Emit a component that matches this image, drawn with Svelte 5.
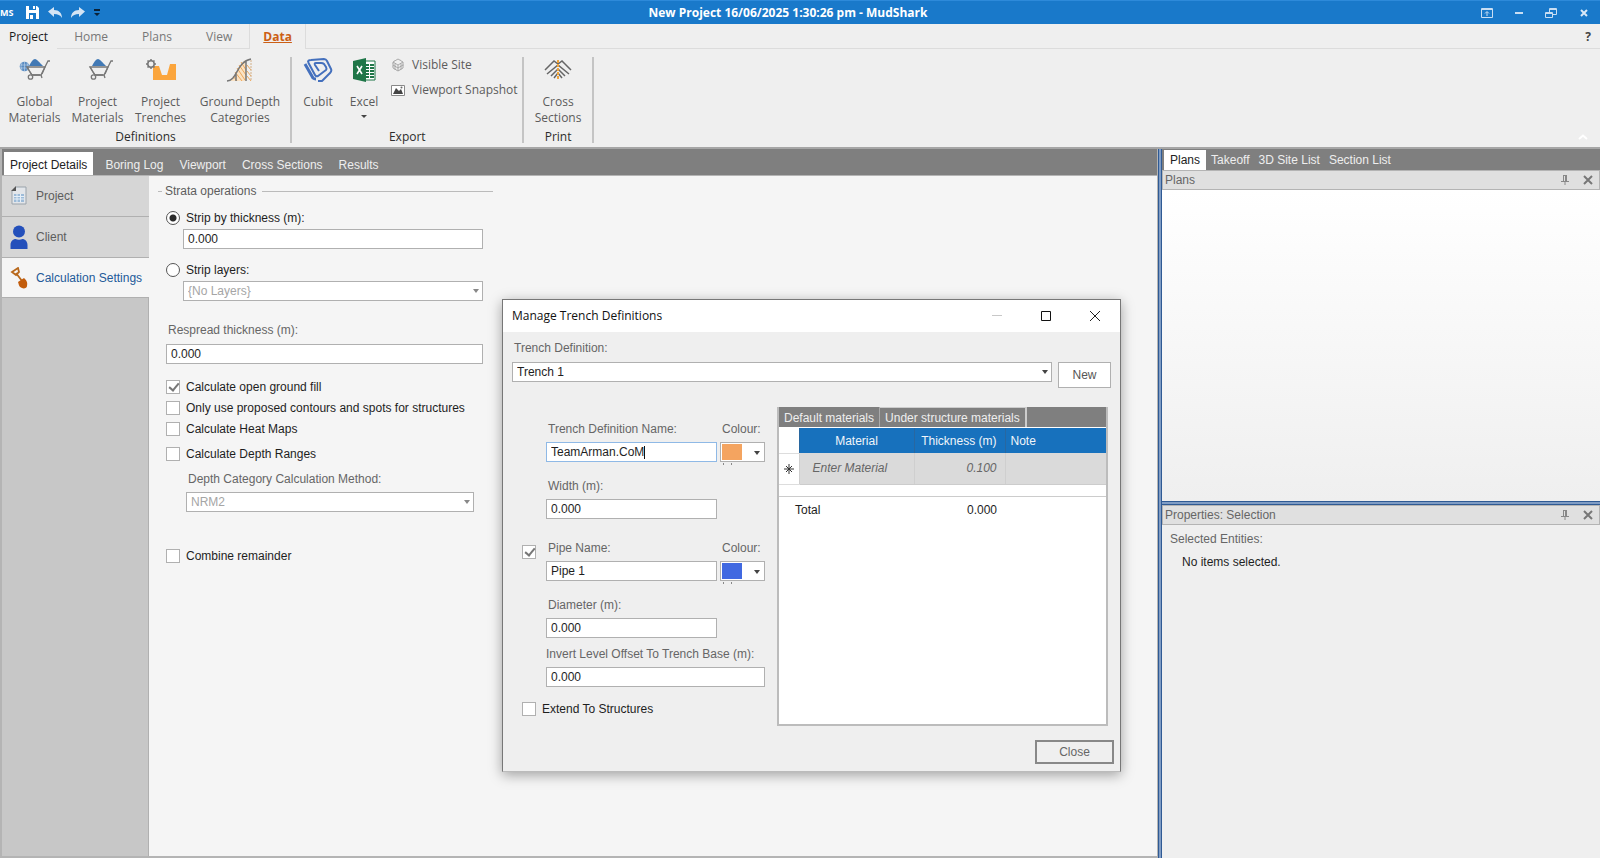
<script>
  const ribbonTabs = ['Home', 'Plans', 'View'];
  const mainTabs = ['Boring Log', 'Viewport', 'Cross Sections', 'Results'];
  const sideTabs = ['Takeoff', '3D Site List', 'Section List'];
  let stripMode = $state('thickness');
</script>

{#snippet barrow(globe)}
  <svg width="34" height="26" viewBox="0 0 34 26" fill="none" stroke="#777" stroke-width="1.3">
    {#if globe}
      <circle cx="6.500" cy="9.500" r="4.800" fill="#5a8cc2" stroke="none" />
      <path d="M2 8h9M2 11h9M6.500 5v9M4 5.500q-2 4 0 8M9 5.500q2 4 0 8" stroke="#c4d6ea" stroke-width=".6" />
    {/if}
    <path d="M11 9c2-4 4-7 6-7s5 4 8 7z" fill="#4179b5" stroke="none" />
    <path d="M9 10h18l-4 8h-9z" />
    <path d="M32 4h-2l-3 6-3 7M14 18l-2-3-3-5M23 18l1 3M14 18l8 0" />
    <circle cx="12.500" cy="20" r="2.200" fill="#efefef" />
  </svg>
{/snippet}

{#snippet pin()}
  <svg width="8" height="12" viewBox="0 0 8 12" fill="none" stroke="#888"><path d="M2 1.500h4M2.500 1v6M5.500 1v6M4.500 1v6M0 7.500h8M4 8v3" /></svg>
{/snippet}

{#snippet cross()}
  <svg width="10" height="10" viewBox="0 0 10 10" stroke="#777" stroke-width="2"><path d="M1 1l8 8M9 1l-8 8" /></svg>
{/snippet}

<div class="app">
  <header class="titlebar">
    <div class="quick">
      <span class="logo">MS</span>
      <button aria-label="Save"><svg width="13" height="13" viewBox="0 0 13 13"><path d="M0 0h11l2 2v11H0z" fill="#fff" /><path d="M3 0h7v4H3zM3 7h7v6H3z" fill="#1979ca" /><path d="M7 0h2v3H7zM4 9h3v4H4z" fill="#fff" /></svg></button>
      <button aria-label="Undo"><svg width="14" height="12" viewBox="0 0 14 12"><path d="M0 4.500L6 0v3c5 0 8 3 8 8-2-3-4-4-8-4v3z" fill="#d4e4f4" /></svg></button>
      <button aria-label="Redo"><svg width="14" height="12" viewBox="0 0 14 12"><path d="M14 4.500L8 0v3c-5 0-8 3-8 8 2-3 4-4 8-4v3z" fill="#d4e4f4" /></svg></button>
      <button aria-label="Customise toolbar"><svg width="6" height="8" viewBox="0 0 6 8"><path d="M0 0h6v2H0zM0 4h6L3 7z" fill="#0b2238" /></svg></button>
    </div>
    <h1>New Project 16/06/2025 1:30:26 pm - MudShark</h1>
    <div class="winbtns">
      <button aria-label="Ribbon options"><svg width="12" height="12" viewBox="0 0 12 12" fill="none" stroke="#c9def3"><path d="M.5 1.500h11v9H.5zM.5 2.500h11M6 9V5M4 6.500L6 4.500l2 2" /></svg></button>
      <button aria-label="Minimise"><svg width="12" height="12" viewBox="0 0 12 12"><path d="M2 5h8v2H2z" fill="#c9def3" /></svg></button>
      <button aria-label="Restore"><svg width="12" height="12" viewBox="0 0 12 12" fill="none" stroke="#c9def3"><path d="M.5 5.500h7v5h-7zM.5 6.500h7M4.500 5V1.500h7v6H8M4.500 2.500h7" /></svg></button>
      <button class="shut" aria-label="Close window"><svg width="8" height="8" viewBox="0 0 8 8" stroke="#d9e8f7" stroke-width="2"><path d="M1 1l6 6M7 1L1 7" /></svg></button>
    </div>
  </header>

  <nav class="rtabs">
    <button class="file">Project</button>
    {#each ribbonTabs as t}<button>{t}</button>{/each}
    <button class="active"><span>Data</span></button>
    <span class="fill"></span>
    <button class="help" aria-label="Help">?</button>
  </nav>

  <section class="ribbon">
    <div class="group">
      <div class="tools">
        <button class="tool">{@render barrow(true)}<span>Global<br />Materials</span></button>
        <button class="tool">{@render barrow(false)}<span>Project<br />Materials</span></button>
        <button class="tool">
          <svg width="32" height="26" viewBox="0 0 32 26"><path d="M8 23V9h6l3 9h5l3-11h6v16z" fill="#fba53c" /><circle cx="6" cy="7" r="3.200" fill="#efefef" stroke="#777" stroke-width="1.500" /><path d="M6 2v2M6 10v2M1 7h2M9 7h2M2.500 3.500l1.300 1.300M8.200 9.200l1.300 1.300M9.500 3.500L8.200 4.800M3.800 9.200l-1.300 1.300" stroke="#777" stroke-width="1.500" /></svg>
          <span>Project<br />Trenches</span>
        </button>
        <button class="tool wide">
          <svg width="28" height="26" viewBox="0 0 28 26" fill="none"><path d="M4 24c6-3 9-19 16-21v21z" fill="#fbe3c4" /><path d="M7 19l4 5M9 15l7 9M11 11l8 12M13 8l7 10M15 5l5 8M21 8l4 5M21 14l4 5M21 19l4 5" stroke="#eda75c" /><path d="M25 3v21" stroke="#d3b088" stroke-dasharray="2 1" /><path d="M1 24c11-1 9-19 24-22M10 17v7M20 4v20" stroke="#777" stroke-width="1.500" /></svg>
          <span>Ground Depth<br />Categories</span>
        </button>
      </div>
      <span class="gname">Definitions</span>
    </div>
    <div class="group">
      <div class="tools">
        <button class="tool slim">
          <svg width="30" height="26" viewBox="0 0 30 26" fill="none" stroke="#4470bd" stroke-linejoin="round"><path d="M2 7l8 14q1 1 3 1" stroke-width="3" /><path d="M5 5q0-2 3-2l13-1q2 0 3 2l4 8q1 2-1 4l-8 8h-4" stroke-width="2" /><path d="M5 5l7 13q1 2 3 1l8-6q1-1 0-3l-2-3q-1-1-3-1h-5q-2 0-1 2l4 6" stroke-width="2" /></svg>
          <span>Cubit</span>
        </button>
        <button class="tool slim">
          <svg width="24" height="26" viewBox="0 0 24 26"><path d="M12 4h11v19H12z" fill="#fff" stroke="#1f7648" /><path d="M14 7h3v2h-3zM18 7h4v2h-4zM14 10h3v2h-3zM18 10h4v2h-4zM14 13h3v2h-3zM18 13h4v2h-4zM14 16h3v2h-3zM18 16h4v2h-4zM14 19h3v2h-3zM18 19h4v2h-4z" fill="#1f7648" /><path d="M1 4l13-3v24L1 22z" fill="#1f7648" /><path d="M5 9l5 8M10 9l-5 8" stroke="#fff" stroke-width="1.600" /></svg>
          <span>Excel</span><i class="tri"></i>
        </button>
        <div class="stack">
          <button><svg width="14" height="14" viewBox="0 0 14 14" fill="none" stroke="#999"><path d="M7 1l5 3-5 3-5-3zM2 4v6l5 3 5-3V4M7 7v6M4 5.500v6M10 5.500v6M2 7l5 3 5-3" stroke-width=".8" /><circle cx="7" cy="7" r="5.500" stroke="#bbb" stroke-dasharray="1 2" /></svg>Visible Site</button>
          <button><svg width="14" height="14" viewBox="0 0 14 14"><path d="M.5 2.500h13v10H.5z" fill="#fff" stroke="#888" /><path d="M2 11l3-6 3 3 2-2 2 5z" fill="#444" /><circle cx="10.500" cy="4.500" r="1" fill="#666" /></svg>Viewport Snapshot</button>
        </div>
      </div>
      <span class="gname">Export</span>
    </div>
    <div class="group">
      <div class="tools">
        <button class="tool">
          <svg width="28" height="26" viewBox="0 0 28 26" fill="none" stroke="#666" stroke-width="1.500"><path d="M1 13l9-9 4 3 4-3 9 9M3 17l11-9 11 9M7 19l7-7 7 7M10 21l4-5 4 5" /><path d="M14 3v20" stroke="#eda33c" stroke-width="2" stroke-dasharray="3 1" /></svg>
          <span>Cross<br />Sections</span>
        </button>
      </div>
      <span class="gname">Print</span>
    </div>
    <button class="collapse" aria-label="Collapse ribbon"><svg width="10" height="6" viewBox="0 0 10 6" fill="none" stroke="#fff" stroke-width="2"><path d="M1 5l4-3.500L9 5" /></svg></button>
  </section>

  <div class="body">
    <main class="left">
      <nav class="mtabs">
        <button class="sel">Project Details</button>
        {#each mainTabs as t}<button>{t}</button>{/each}
      </nav>
      <div class="work">
        <nav class="side">
          <button><svg width="18" height="20" viewBox="0 0 18 20"><path d="M6 1h10v17H2V5z" fill="#e3e6ea" stroke="#9aa3ab" /><path d="M6 0v5H1z" fill="#555" /><path d="M4 8h10v8H4z" fill="#9dbbd8" /><path d="M4 10.500h10M4 13h10M7 8v8M10.500 8v8" stroke="#e6eff7" /></svg>Project</button>
          <button><svg width="18" height="24" viewBox="0 0 18 24" fill="#2450bb"><circle cx="9" cy="6.500" r="6" /><path d="M.5 24v-4c0-4 3-6 5-6 2 1 5 1 7 0 2 0 5 2 5 6v4z" /></svg>Client</button>
          <button class="sel"><svg width="18" height="22" viewBox="0 0 18 22"><path d="M2 5l6-4 1 4-3 3zM6 6l6 8" fill="none" stroke="#b8681c" stroke-width="1.800" /><path d="M8 15l6-4c2 2 4 4 3 8 0 2-3 3-5 2-3-1-3-3-4-6z" fill="#c25c0c" /></svg>Calculation Settings</button>
        </nav>
        <form class="settings">
          <fieldset>
            <legend>Strata operations</legend>
            <label class="opt"><input type="radio" name="strip" value="thickness" bind:group={stripMode} />Strip by thickness (m):</label>
            <input class="box in" type="text" value="0.000" aria-label="Strip thickness" />
            <label class="opt second"><input type="radio" name="strip" value="layers" bind:group={stripMode} />Strip layers:</label>
            <div class="combo in"><select class="box" disabled aria-label="Strip layers"><option>{'{No Layers}'}</option></select></div>
          </fieldset>
          <label class="cap respread" for="respread">Respread thickness (m):</label>
          <input class="box resin" id="respread" type="text" value="0.000" />
          <div class="checks">
            <label class="opt"><input type="checkbox" checked />Calculate open ground fill</label>
            <label class="opt"><input type="checkbox" />Only use proposed contours and spots for structures</label>
            <label class="opt"><input type="checkbox" />Calculate Heat Maps</label>
          </div>
          <label class="opt"><input type="checkbox" />Calculate Depth Ranges</label>
          <div class="depth">
            <label class="cap" for="method">Depth Category Calculation Method:</label>
            <div class="combo"><select class="box" id="method" disabled><option>NRM2</option></select></div>
          </div>
          <label class="opt"><input type="checkbox" />Combine remainder</label>
        </form>
      </div>
    </main>

    <div class="vsplit"></div>
    <aside class="right">
      <nav class="ptabs">
        <button class="sel">Plans</button>
        {#each sideTabs as t}<button>{t}</button>{/each}
      </nav>
      <div class="phead"><h2>Plans</h2><button aria-label="Pin plans">{@render pin()}</button><button aria-label="Close plans">{@render cross()}</button></div>
      <div class="plans"></div>
      <div class="hsplit"></div>
      <div class="phead"><h2>Properties: Selection</h2><button aria-label="Pin properties">{@render pin()}</button><button aria-label="Close properties">{@render cross()}</button></div>
      <div class="props"><h3>Selected Entities:</h3><p>No items selected.</p></div>
    </aside>
  </div>

  <div class="dialog" role="dialog" aria-labelledby="dlg">
    <header>
      <h2 id="dlg">Manage Trench Definitions</h2>
      <button aria-label="Minimise dialog" disabled><svg width="12" height="12" viewBox="0 0 12 12"><path d="M1 5h10v1H1z" fill="#c8c8c8" /></svg></button>
      <button aria-label="Maximise dialog"><svg width="12" height="12" viewBox="0 0 12 12" fill="none" stroke="#111"><path d="M1.500 1.500h9v9h-9z" /></svg></button>
      <button aria-label="Close dialog"><svg width="12" height="12" viewBox="0 0 12 12" stroke="#222"><path d="M1 1l10 10M11 1L1 11" /></svg></button>
    </header>
    <div class="pick">
      <label class="cap" for="trench">Trench Definition:</label>
      <div class="pickrow">
        <div class="combo"><select class="box" id="trench"><option>Trench 1</option></select></div>
        <button class="new">New</button>
      </div>
    </div>
    <div class="cols">
      <div class="fields">
        <div class="pair">
          <div class="field"><label class="cap" for="tname">Trench Definition Name:</label><div class="editing"><input class="box" id="tname" type="text" value="TeamArman.CoM" /><i></i></div></div>
          <div class="colour"><span class="cap">Colour:</span><button class="swatch" aria-label="Trench colour"><b class="orange"></b></button></div>
        </div>
        <div class="field"><label class="cap" for="width">Width (m):</label><input class="box" id="width" type="text" value="0.000" /></div>
        <div class="pair pipe">
          <input class="use" type="checkbox" checked aria-label="Use pipe" />
          <div class="field"><label class="cap" for="pname">Pipe Name:</label><input class="box" id="pname" type="text" value="Pipe 1" /></div>
          <div class="colour"><span class="cap">Colour:</span><button class="swatch" aria-label="Pipe colour"><b class="blue"></b></button></div>
        </div>
        <div class="field"><label class="cap" for="dia">Diameter (m):</label><input class="box" id="dia" type="text" value="0.000" /></div>
        <div class="field full"><label class="cap" for="invert">Invert Level Offset To Trench Base (m):</label><input class="box" id="invert" type="text" value="0.000" /></div>
        <label class="opt extend"><input type="checkbox" />Extend To Structures</label>
      </div>
      <div class="materials">
        <nav><button>Default materials</button><button class="sel">Under structure materials</button></nav>
        <table>
          <thead><tr><th class="mark"></th><th class="mat">Material</th><th class="thick">Thickness (m)</th><th class="note">Note</th></tr></thead>
          <tbody><tr><td class="mark"><svg width="10" height="10" viewBox="0 0 10 10" stroke="#333"><path d="M5 0v10M0 5h10M2 2l6 6M8 2L2 8" /></svg></td><td class="mat">Enter Material</td><td class="thick">0.100</td><td></td></tr></tbody>
          <tfoot><tr class="gap"><td colspan="4"></td></tr><tr><td colspan="2" class="total">Total</td><td class="thick">0.000</td><td></td></tr></tfoot>
        </table>
      </div>
    </div>
    <footer><button>Close</button></footer>
  </div>
</div>

<style>
  :global(body) { margin: 0; }
  .app, .app * { box-sizing: border-box; }
  .app { display: flex; flex-direction: column; min-height: 100vh; position: relative; background: #efefef; color: #1e1e1e; font: 12px/16px "Liberation Sans", Arial, sans-serif; }
  button, input, select { font: inherit; color: inherit; margin: 0; padding: 0; border: 0; background: none; border-radius: 0; }
  button { display: flex; align-items: center; justify-content: center; white-space: nowrap; }
  h1, h2, h3, p { margin: 0; font: inherit; }
  svg { display: block; flex: none; }
  .titlebar, .rtabs, .ribbon, .dialog header { font-family: "Open Sans", "Noto Sans", sans-serif; }

  .titlebar { display: grid; grid-template-columns: 1fr auto 1fr; align-items: center; height: 24px; background: #1979ca; border-top: 1px solid #2d8ada; color: #fff; }
  .titlebar h1 { font-weight: 700; font-size: 12px; padding-right: 24px; }
  .quick { display: flex; align-items: center; gap: 9px; }
  .logo { font: 700 9px/12px "Open Sans", sans-serif; width: 17px; }
  .winbtns { display: flex; justify-content: flex-end; align-items: center; gap: 20px; padding-right: 12px; }
  .shut { margin-left: 3px; }

  .rtabs { display: flex; height: 25px; color: #777; }
  .rtabs button { border-bottom: 1px solid #dcdcdc; padding: 1px 17px 0; }
  .rtabs .file { border-bottom-color: transparent; color: #1b1b1b; padding: 1px 9px 0; }
  .rtabs .active { color: #cc5f15; font-weight: 700; text-decoration: underline; border: 1px solid #dcdcdc; border-bottom: 0; border-top: 0; padding: 0 13px; }
  .rtabs .fill { flex: 1; border-bottom: 1px solid #dcdcdc; }
  .rtabs .help { color: #444; font-weight: 700; padding: 1px 9px 0; }

  .ribbon { display: flex; height: 100px; padding: 8px 0 4px; border-bottom: 2px solid #a6a6a6; }
  .group { display: flex; flex-direction: column; border-right: 2px solid #c4c4c4; padding: 0 2px 0 3px; color: #5c5c5c; }
  .tools { display: flex; flex: 1; }
  .tool { flex-direction: column; justify-content: flex-start; width: 63px; }
  .tool span { margin-top: 11px; }
  .tool.wide { width: 96px; }
  .tool.slim { width: 46px; }
  .tri { border: 3px solid transparent; border-top-color: #444; border-bottom: 0; margin-top: 5px; }
  .stack { padding: 0 2px 0 4px; }
  .stack button { gap: 7px; height: 16px; margin-bottom: 9px; }
  .gname { text-align: center; color: #2c2c2c; line-height: 12px; }
  .collapse { margin: auto 12px 0 auto; padding-bottom: 3px; }

  .body { display: flex; flex: 1; }
  .left { flex: 1; display: flex; flex-direction: column; border: solid #b4b4b4; border-width: 0 1px 2px 2px; min-width: 0; }
  .mtabs { display: flex; align-items: flex-end; height: 27px; background: #7f7f7f; color: #eee; padding-left: 2px; border-bottom: 1px solid #b4b4b4; }
  .mtabs button { height: 23px; padding: 3px 8px 0; }
  .mtabs .sel { background: #fff; color: #222; padding: 3px 6px 0; margin-right: 4px; }
  .work { display: flex; flex: 1; }
  .side { width: 147px; background: #c7c7c7; border-right: 1px solid #b0b0b0; }
  .side button { width: 147px; height: 41px; justify-content: flex-start; gap: 8px; padding-left: 8px; background: #d6d6d6; border-bottom: 1px solid #b0b0b0; color: #5d5d5d; }
  .side .sel { background: #f5f5f5; color: #235a99; height: 40px; }
  .settings { flex: 1; background: #f5f5f5; padding: 7px 9px; }
  .settings > :not(fieldset) { max-width: 317px; margin-left: 8px; }
  fieldset { border: 0; border-top: 1px solid #bbb; margin: 0; padding: 8px 10px 0 8px; width: 100%; max-width: 335px; min-width: 0; }
  legend { color: #5d5d5d; padding: 0 6px 0 3px; margin-left: -4px; }
  .opt { display: flex; align-items: center; gap: 6px; height: 21px; white-space: nowrap; }
  input[type='radio'], input[type='checkbox'] { appearance: none; width: 14px; height: 14px; background: #fff; border: 1px solid #b0b0b0; flex: none; position: relative; }
  input[type='radio'] { border-color: #555; border-radius: 50%; }
  input[type='radio']:checked { background: radial-gradient(circle, #2b2b2b 3px, #fff 4px); }
  input[type='checkbox']:checked::after { content: ''; position: absolute; left: 4px; top: 0; width: 4px; height: 8px; border: solid #777; border-width: 0 2px 2px 0; transform: rotate(40deg); }
  .box { display: block; appearance: none; width: 100%; height: 20px; background: #fff; border: 1px solid #b0b0b0; padding: 0 4px; }
  .box:disabled { color: #a5a5a5; opacity: 1; }
  .combo { position: relative; }
  .combo::after, .swatch::after { content: ''; position: absolute; right: 4px; top: 8px; border: 3px solid transparent; border-top: 4px solid #444; border-bottom: 0; }
  .combo:has(:disabled)::after { border-top-color: #888; }
  .in { width: auto; margin: 1px 0 0 17px; }
  input.in { width: calc(100% - 17px); }
  .opt.second { margin-top: 10px; }
  .cap { display: block; color: #666; white-space: nowrap; padding-left: 2px; }
  .respread { margin-top: 21px; }
  .resin { margin-top: 6px; }
  .checks { padding: 12px 0 4px; }
  .depth { padding: 7px 9px 33px 20px; }
  .depth .combo { margin-top: 5px; }

  .vsplit { width: 4px; background: #7f9cc4; border: solid #2f5a94; border-width: 0 1px; }
  .hsplit { height: 4px; background: #7f9cc4; border: solid #2f5a94; border-width: 1px 0; }
  .right { width: 438px; display: flex; flex-direction: column; }
  .ptabs { display: flex; height: 21px; background: #7f7f7f; color: #eee; padding: 1px 2px 0; }
  .ptabs button { padding: 0 4px 0 5px; }
  .ptabs .sel { background: #fff; color: #222; padding: 0 6px; }
  .phead { display: flex; align-items: center; height: 20px; background: #e0e0e0; border: 1px solid #b4b4b4; color: #666; padding: 0 6px 0 2px; gap: 14px; }
  .phead h2 { flex: 1; }
  .plans { flex: 317 0 0px; background: linear-gradient(#fff, #efefef); }
  .props { flex: 327 0 0px; padding: 6px 8px; color: #666; }
  .props p { color: #1e1e1e; margin: 7px 12px; }

  .dialog { position: absolute; left: 502px; top: 299px; width: 619px; background: #efefef; border: 1px solid #777; border-bottom-color: #bbb; box-shadow: 0 3px 12px rgb(0 0 0 / 35%); }
  .dialog header { display: flex; align-items: center; height: 32px; background: #fff; padding: 0 19px 0 9px; gap: 37px; color: #111; }
  .dialog header h2 { flex: 1; }
  .pick { padding: 8px 9px 0; }
  .pickrow { display: flex; gap: 6px; align-items: flex-start; margin-top: 6px; }
  .pickrow .combo { flex: 1; }
  .new { width: 53px; height: 26px; background: #fff; border: 1px solid #b0b0b0; color: #555; }
  .cols { display: flex; gap: 12px; padding: 19px 12px 0 19px; }
  .fields { width: 243px; padding-top: 14px; flex: none; }
  .pair { display: flex; gap: 3px; position: relative; }
  .field { width: 195px; padding-left: 24px; margin-bottom: 21px; flex: none; }
  .field .box, .colour .swatch { margin-top: 5px; }
  .pair .field { margin-bottom: 16px; }
  .pipe { margin-top: 20px; }
  .field.full { width: 100%; margin: -13px 0 15px; }
  .field.full .cap { padding-left: 0; }
  .use { position: absolute !important; left: 0; top: 5px; }
  .editing { position: relative; }
  .editing .box { border-color: #8fb9e6; }
  .editing i { position: absolute; left: 98px; top: 4px; height: 13px; border-left: 1px solid #111; }
  .swatch { position: relative; width: 45px; height: 20px; background: #fff; border: 1px solid #b0b0b0; justify-content: flex-start; padding-left: 1px; }
  .swatch b { width: 20px; height: 16px; }
  .swatch::before { content: ''; position: absolute; left: 2px; top: 20px; width: 7px; height: 2px; border: solid #888; border-width: 0 1px; }
  .orange { background: #f4a460; }
  .blue { background: #4169e1; }
  .extend { height: 14px; }
  .materials { flex: 1; height: 319px; background: #fff; border: 2px solid #bcbcbc; border-top: 0; }
  .materials nav { display: flex; height: 20px; background: #7f7f7f; color: #eee; }
  .materials nav button { padding: 1px 5px 0; border-right: 1px solid #aaa; }
  .materials nav .sel { border: 1px solid #ccc; border-width: 1px 2px 0 0; padding-top: 0; }
  table { width: 100%; border-collapse: collapse; table-layout: fixed; margin-top: 1px; }
  th, td { padding: 0; font-weight: 400; text-align: left; }
  th { background: #1771bd; color: #f0f5fa; height: 25px; border-left: 1px solid #2867a0; }
  tbody td { background: #dadada; height: 31px; border-left: 1px solid #cfcfcf; border-bottom: 1px solid #ccc; font-style: italic; color: #666; }
  th.mark, td.mark { width: 20px; background: #fff; border: 0; border-bottom: 1px solid #ddd; }
  .mark svg { margin: auto; }
  th.mat { width: 115px; text-align: center; }
  td.mat { padding-left: 13px; }
  th.thick { width: 91px; }
  .thick { text-align: right; padding-right: 8px; white-space: nowrap; }
  th.note { padding-left: 5px; }
  .gap td { height: 12px; border-bottom: 1px solid #ccc; }
  tfoot td { height: 28px; }
  .total { padding-left: 16px; }
  footer { display: flex; justify-content: flex-end; padding: 14px 6px 7px; }
  footer button { width: 79px; height: 24px; border: 2px solid #888; color: #666; }
</style>
